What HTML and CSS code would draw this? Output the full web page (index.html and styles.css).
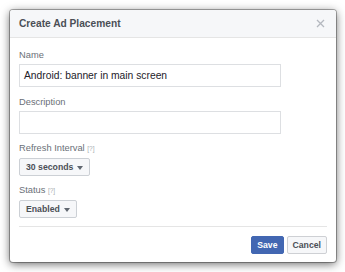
FILE: index.html
```html
<!DOCTYPE html>
<html>
<head>
<meta charset="utf-8">
<link rel="stylesheet" href="styles.css">
</head>
<body>
<div class="dialog">
  <div class="header">
    <span class="title">Create Ad Placement</span>
    <svg class="close" width="9" height="9" viewBox="0 0 9 9"><path d="M1 1L8 8M8 1L1 8" stroke="#b4b8bf" stroke-width="1.3" fill="none"/></svg>
  </div>
  <div class="content">
    <div class="field">
      <label class="label">Name</label>
      <div class="input">Android: banner in main screen</div>
    </div>
    <div class="field">
      <label class="label">Description</label>
      <div class="input"></div>
    </div>
    <div class="field">
      <label class="label">Refresh Interval <span class="help">[?]</span></label>
      <div class="select">30 seconds <span class="caret"></span></div>
    </div>
    <div class="field">
      <label class="label">Status <span class="help">[?]</span></label>
      <div class="select">Enabled <span class="caret"></span></div>
    </div>
  </div>
  <div class="footer">
    <div class="btn primary">Save</div>
    <div class="btn">Cancel</div>
  </div>
</div>
</body>
</html>
```

FILE: styles.css
```css
html, body {
  margin: 0;
  padding: 0;
  background: #ffffff;
}
body {
  font-family: "Liberation Sans", Arial, sans-serif;
  padding: 10px;
}
.dialog {
  width: 326px;
  height: 252px;
  background: #ffffff;
  border-radius: 3px;
  box-shadow: 0 0 0 1px rgba(0, 0, 0, 0.3), 0 2px 10px rgba(0, 0, 0, 0.6);
  overflow: hidden;
  display: flex;
  flex-direction: column;
}
.header {
  height: 28px;
  box-sizing: border-box;
  background: #f6f7f9;
  border-bottom: 1px solid #e5e5e5;
  display: flex;
  align-items: center;
  justify-content: space-between;
  padding: 0 11px 0 9px;
}
.title {
  font-size: 10.2px;
  font-weight: bold;
  color: #4b4f56;
}
.close {
  display: block;
}
.content {
  padding: 9px 9px 0;
  display: flex;
  flex-direction: column;
}
.field {
  display: flex;
  flex-direction: column;
  align-items: flex-start;
  margin-bottom: 6px;
}
.field:nth-child(1) {
  margin-bottom: 7px;
}
.label {
  font-size: 9.3px;
  line-height: 16px;
  height: 16px;
  color: #6a6f77;
  margin-bottom: 1px;
}
.help {
  font-size: 6.5px;
  line-height: 1;
  color: #a8acb2;
}
.input {
  width: 262px;
  height: 23px;
  box-sizing: border-box;
  border: 1px solid #dddfe2;
  padding: 0 4px;
  font-size: 10.3px;
  line-height: 21px;
  color: #1d2129;
}
.select {
  margin-top: 1px;
  height: 18px;
  box-sizing: border-box;
  border: 1px solid #ccd0d5;
  border-radius: 2px;
  background: #f6f7f9;
  padding: 0 6px;
  font-size: 8.7px;
  font-weight: bold;
  line-height: 16px;
  color: #4b4f56;
  display: flex;
  align-items: center;
  gap: 4px;
}
.caret {
  width: 0;
  height: 0;
  border-left: 3px solid transparent;
  border-right: 3px solid transparent;
  border-top: 4px solid #606770;
  margin-top: 1px;
}
.footer {
  margin: 2px 9px 0;
  border-top: 1px solid #e5e5e5;
  padding-top: 9px;
  display: flex;
  justify-content: flex-end;
  gap: 3px;
}
.btn {
  height: 18px;
  box-sizing: border-box;
  border: 1px solid #ced0d4;
  border-radius: 2px;
  background: #f6f7f9;
  padding: 0 5px;
  font-size: 8.7px;
  font-weight: bold;
  line-height: 16px;
  color: #4b4f56;
}
.btn.primary {
  background: #4267b2;
  border-color: #4267b2;
  color: #ffffff;
}
```
